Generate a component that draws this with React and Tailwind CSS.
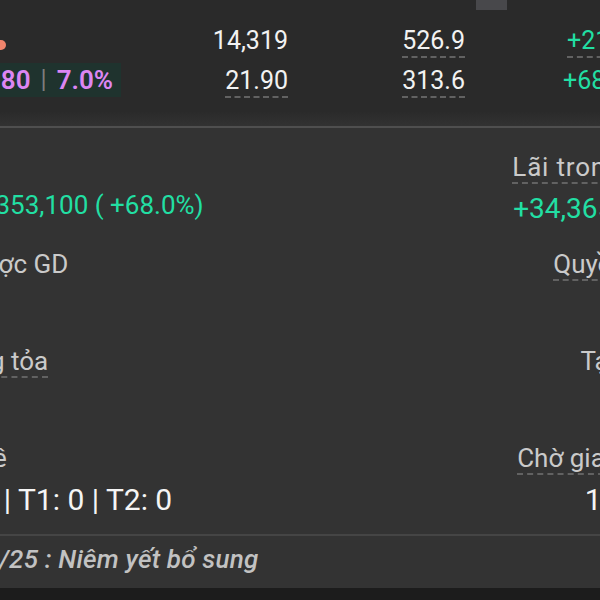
import React from 'react';

const Dashed = ({ children, className = '' }) => (
  <span className={`inline-block border-b-2 border-dashed border-[#626262] ${className}`}>{children}</span>
);

export default function App() {
  return (
    <div className="w-[600px] h-[600px] overflow-hidden bg-[#333333] flex flex-col font-['Roboto','Noto_Sans',sans-serif] text-[25px] leading-[30px] text-[#f2f2f2] whitespace-nowrap">
      {/* top quote rows */}
      <div className="h-[126px] shrink-0 flex flex-col bg-[linear-gradient(to_bottom,#2a2a2a_88%,#323232)]">
        <div className="h-[10px] flex">
          <div className="ml-[476px] w-[31px] h-full bg-[#48484b]" />
        </div>
        <div className="mt-[16px] flex flex-col gap-[8px]">
          <div className="grid grid-cols-[160px_128px_177px_135px] items-start">
            <div className="flex">
              <span className="mt-[14px] ml-[-4px] w-[10px] h-[10px] rounded-full bg-[#f0846c]" />
            </div>
            <div className="text-right">14,319</div>
            <div className="text-right">
              <Dashed>526.9</Dashed>
            </div>
            <div className="pl-[102px] text-[#22dfa3]">
              <Dashed>+21.36%</Dashed>
            </div>
          </div>
          <div className="grid grid-cols-[160px_128px_177px_135px] items-start">
            <div className="flex">
              <div className="mt-[-3px] h-[34px] pr-[8px] flex items-center gap-[10px] bg-[#1f332e] font-semibold text-[26px] text-[#dc86f3]">
                <span className="ml-[-35px]">4,980</span>
                <span className="font-normal text-[25px] text-[#7d7d7d]">|</span>
                <span>7.0%</span>
              </div>
            </div>
            <div className="text-right">
              <Dashed>21.90</Dashed>
            </div>
            <div className="text-right">
              <Dashed>313.6</Dashed>
            </div>
            <div className="pl-[98px] text-[#22dfa3]">+68.52%</div>
          </div>
        </div>
      </div>

      <div className="h-[2px] shrink-0 bg-[#4f4f4f]" />

      {/* account summary */}
      <div className="pt-[24px] flex flex-col text-[26px] text-[#cacaca]">
        <div className="h-[97px] flex justify-between">
          <div className="flex flex-col items-start pt-[38px]">
            <span className="ml-[-39px] text-[#22dfa3]">+1,353,100 ( +68.0%)</span>
          </div>
          <div className="flex flex-col items-end mr-[-75px]">
            <Dashed className="mr-[-12px] tracking-[0.8px]">Lãi trong ngày</Dashed>
            <span className="mt-[10px] mr-[9px] text-[28px] text-[#22dfa3]">+34,365,200</span>
          </div>
        </div>

        <div className="h-[97px] flex justify-between">
          <div className="flex flex-col items-start">
            <span className="ml-[-35px]">Được GD</span>
          </div>
          <div className="flex flex-col items-end mr-[-75px]">
            <Dashed>Quyền chờ</Dashed>
          </div>
        </div>

        <div className="h-[97px] flex justify-between">
          <div className="flex flex-col items-start">
            <Dashed className="ml-[-70px]">Phong tỏa</Dashed>
          </div>
          <div className="flex flex-col items-end mr-[-75px]">
            <span>Tạm giữ</span>
          </div>
        </div>

        <div className="flex justify-between">
          <div className="flex flex-col items-start">
            <span className="ml-[-72px]">Chờ về</span>
            <span className="mt-[12px] ml-[-70px] text-[30px] text-[#f5f5f5]">T0: 0 | T1: 0 | T2: 0</span>
          </div>
          <div className="flex flex-col items-end mr-[-75px]">
            <Dashed>Chờ giao dịch</Dashed>
            <span className="mt-[10px] text-[30px] text-[#f5f5f5]">10,000</span>
          </div>
        </div>
      </div>

      <div className="mt-[19px] h-[2px] shrink-0 bg-[#454545]" />

      <div className="h-[52px] shrink-0 pt-[8px]">
        <span className="inline-block ml-[-30px] italic font-medium text-[26px] tracking-[0.2px] text-[#c2c2c2]">03/25 : Niêm yết bổ sung</span>
      </div>

      <div className="flex-1 bg-[#1c1c1c]" />
    </div>
  );
}
